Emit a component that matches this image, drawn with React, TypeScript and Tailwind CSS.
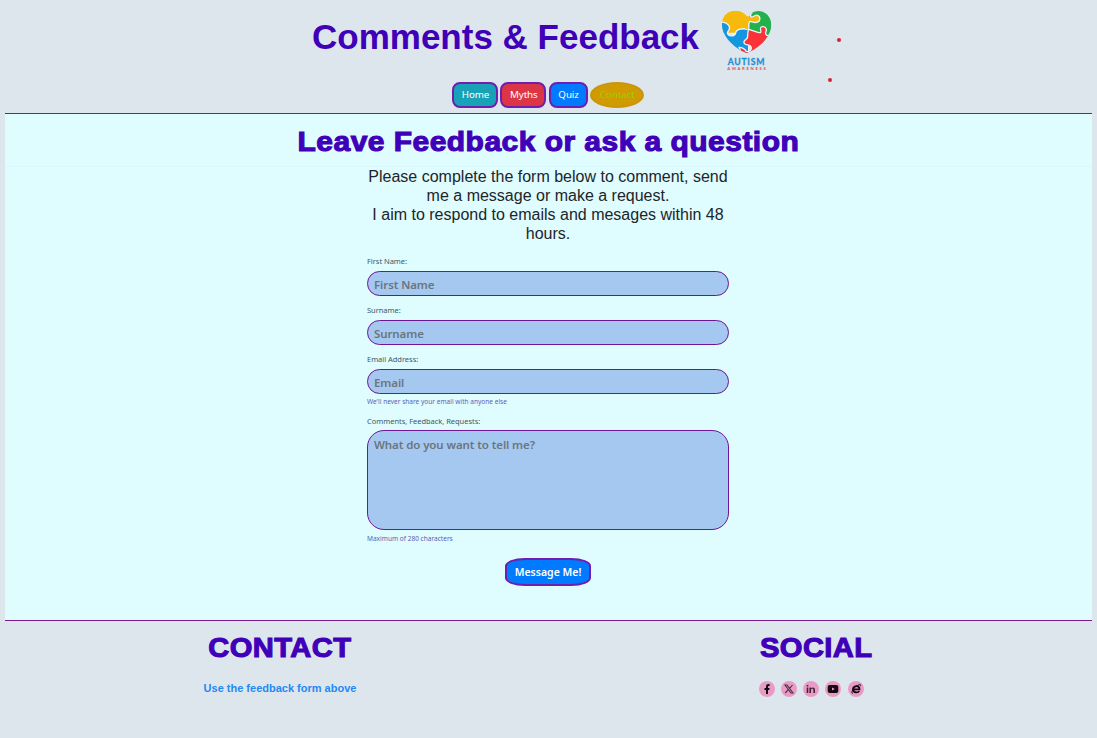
import React from "react";

const sans = "font-['Liberation_Sans',Arial,sans-serif]";
const heavy =
  "font-['Liberation_Sans',Arial,sans-serif] font-bold text-[28px] leading-[32px] text-[#4000b8] whitespace-nowrap [-webkit-text-stroke:1.1px_#4000b8]";

function Logo() {
  return (
    <svg width="62" height="70" viewBox="0 0 186 210" className="block">
      <defs>
        <clipPath id="heart">
          <path d="M97 35C82 15 58 14 43 21C24 30 18 50 22 70C28 101 62 133 95 144C128 133 162 101 168 70C172 48 162 27 143 20C126 14 108 20 97 35Z" />
        </clipPath>
      </defs>
      <g clipPath="url(#heart)" stroke="#eef3f3" strokeWidth="4" strokeLinejoin="round">
        <rect x="10" y="10" width="90" height="75" fill="#f7b90c" />
        <path d="M97 10H180V115H97V50C92 38 112 24 110 10Z" fill="#22b14c" />
        <path d="M10 52C26 50 38 55 43 65C47 74 34 79 38 87C43 96 60 94 62 84C63 74 76 68 101 73V150H10Z" fill="#1596e0" />
        <path d="M101 73C114 76 128 83 136 83C142 81 130 67 142 65C154 64 156 75 152 82C149 91 160 94 180 97V160H70C76 150 78 134 72 127C80 126 90 132 94 139C104 142 111 134 108 125C105 117 96 122 89 116C82 110 93 104 97 99C99 90 97 82 101 73Z" fill="#fb3238" />
        <path d="M101 74C103 61 98 52 106 49C114 51 123 57 132 49C139 40 132 29 122 31C115 33 114 38 107 35L96 33L90 70Z" fill="#f7b90c" stroke="none" />
        <path d="M101 74C103 61 98 52 106 49C114 51 123 57 132 49C139 40 132 29 122 31C115 33 114 38 107 35C105 31 108 26 112 22" fill="none" />
      </g>
      <text x="38" y="180" textLength="110" lengthAdjust="spacing" fontFamily="Lato, sans-serif" fontWeight="700" fontSize="26" fill="#1c8fd6" stroke="#1c8fd6" strokeWidth="0.8">AUTISM</text>
      <text x="37" y="194" textLength="115" lengthAdjust="spacing" fontFamily="Lato, sans-serif" fontWeight="700" fontSize="12.5" fill="#e2434c">AWARENESS</text>
    </svg>
  );
}

const nav = [
  { label: "Home", cls: "w-[46px] bg-[#17a2b8] border-[#6f1fb0] text-white rounded-[8px]" },
  { label: "Myths", cls: "w-[46px] bg-[#dc3545] border-[#6f1fb0] text-white rounded-[8px]" },
  { label: "Quiz", cls: "w-[39px] bg-[#007bff] border-[#6f1fb0] text-white rounded-[8px]" },
  { label: "Contact", cls: "w-[54px] bg-[#cf9b00] border-[#c9960b] text-[#6fe000] rounded-[50%]" },
];

const label = "block h-[16px] text-[7.5px] leading-[16px] tracking-[-0.03px] text-[#41585f] whitespace-nowrap";
const hint = "h-[14px] text-[6.55px] leading-[14px] text-[#5b5fb5] whitespace-nowrap";
const field =
  "block w-full border border-[#6f1599] bg-[#a5c8f0] px-[6px] font-semibold text-[11.5px] tracking-[-0.1px] text-[#6c757d] placeholder:text-[#6c757d] placeholder:opacity-100 outline-none";

function Field({ name }: { name: string }) {
  return <input className={`${field} h-[25px] rounded-[13px] pt-px`} placeholder={name} />;
}

function Social({ children }: { children: React.ReactNode }) {
  return (
    <a className="flex size-4 items-center justify-center rounded-full bg-[#e99bc8]">
      <svg viewBox="0 0 16 16" className="size-4">{children}</svg>
    </a>
  );
}

export default function App() {
  return (
    <div className="relative h-[738px] w-[1097px] overflow-hidden bg-[#dee6ed] px-[4.5px] font-['Noto_Sans','Open_Sans',sans-serif]">
      <header className="h-[113px]">
        <div className="flex h-[82px] items-start pl-[307.5px]">
          <h1 className={`${sans} mt-[17px] w-[403px] whitespace-nowrap text-[35px] font-bold leading-[40px] text-[#4000b8]`}>
            Comments &amp; Feedback
          </h1>
          <div className="mt-[5px]"><Logo /></div>
        </div>
        <nav className="flex gap-[2.3px] pl-[447.5px]">
          {nav.map((n) => (
            <a key={n.label} className={`flex h-[26px] items-center justify-center border-2 pl-[1px] text-[9.8px] leading-none tracking-[-0.1px] ${n.cls}`}>
              {n.label}
            </a>
          ))}
        </nav>
      </header>
      <span className="absolute left-[836.5px] top-[37.5px] size-[4px] rounded-full bg-[#d8232e]" />
      <span className="absolute left-[827.5px] top-[77.5px] size-[4px] rounded-full bg-[#d8232e]" />

      <main className="h-[508px] w-[1087px] border-y border-[#7a1c8e] bg-[#dffcff]">
        <div className="flex h-[53px] justify-center border-b border-[#d9f8fc] pt-[12px]">
          <h2 className={`${heavy} origin-center scale-x-[1.07] tracking-[0.45px]`}>Leave Feedback or ask a question</h2>
        </div>
        <form className="ml-[362.5px] w-[362px]">
          <p className={`${sans} h-[86px] whitespace-nowrap text-center text-[16px] leading-[19px] text-[#212529]`}>
            Please complete the form below to comment, send<br />me a message or make a request.<br />
            I aim to respond to emails and mesages within 48<br />hours.
          </p>
          <div className="h-[49px]"><label className={`${label} mb-[2px]`}>First Name:</label><Field name="First Name" /></div>
          <div className="h-[49px]"><label className={`${label} mb-[2px]`}>Surname:</label><Field name="Surname" /></div>
          <div className="h-[62px]">
            <label className={`${label} mb-[2px]`}>Email Address:</label>
            <Field name="Email" />
            <p className={`${hint} pt-px`}>We'll never share your email with anyone else</p>
          </div>
          <label className={label}>Comments, Feedback, Requests:</label>
          <textarea className={`${field} mt-px h-[100px] resize-none rounded-[17px] pt-[5px] leading-[18px]`} placeholder="What do you want to tell me?" />
          <p className={`${hint} mt-[2px]`}>Maximum of 280 characters</p>
          <div className="flex justify-center pt-[12px]">
            <button type="button" className="h-[28px] w-[86px] whitespace-nowrap border-2 border-[#6f1fb0] bg-[#007bff] pt-[2px] text-[10.5px] font-semibold text-white rounded-[20px/8px]">
              Message Me!
            </button>
          </div>
        </form>
      </main>

      <footer className="grid grid-cols-2 pt-[11px]">
        <section className="flex flex-col items-center pl-[7px]">
          <h2 className={`${heavy} scale-x-[1.04] tracking-[0.4px]`}>CONTACT</h2>
          <p className={`${sans} mt-[17px] whitespace-nowrap text-[11px] font-bold leading-[14px] text-[#2389f2]`}>Use the feedback form above</p>
        </section>
        <section className="pl-[210px]">
          <h2 className={`${heavy} ml-px w-fit origin-left scale-x-[1.04] tracking-[0.4px]`}>SOCIAL</h2>
          <div className="mt-[17px] flex gap-[6.3px]">
            <Social><path d="M7 13V9H5.5V7H7V5.5C7 3.8 8 3 9.2 3H10.6V5H9.8C9.2 5 9 5.3 9 5.8V7H10.6L10.3 9H9V13Z" fill="#16080f" /></Social>
            <Social><path d="M4 4H6L12 12H10ZM11.5 4L8.6 7.3M7.3 8.7L4.2 12" fill="none" stroke="#4a303f" strokeWidth="1.1" /></Social>
            <Social><path d="M3.7 6.5H5.3V12H3.7ZM3.7 4H5.3V5.5H3.7ZM6.4 6.5H8V7.3C9.2 5.8 12 6.2 12 8.7V12H10.4V9C10.4 7.4 8 7.4 8 9V12H6.4Z" fill="#4a2038" /></Social>
            <Social><rect x="2.7" y="4" width="10.6" height="8" rx="2" fill="#16080f" /><path d="M7 6.4V9.6L9.8 8Z" fill="#e99bc8" /></Social>
            <Social><path d="M11.2 10C10.3 12 5.5 12.2 5 8.7C4.5 4.4 11.5 3.7 11.5 8.3H6" fill="none" stroke="#16080f" strokeWidth="1.8" /><path d="M4.8 12.5C2.2 12 5.5 5.4 11.6 3.6C12.8 3.4 12.7 4.4 12.3 5.2" fill="none" stroke="#16080f" strokeWidth="1" /></Social>
          </div>
        </section>
      </footer>
    </div>
  );
}
